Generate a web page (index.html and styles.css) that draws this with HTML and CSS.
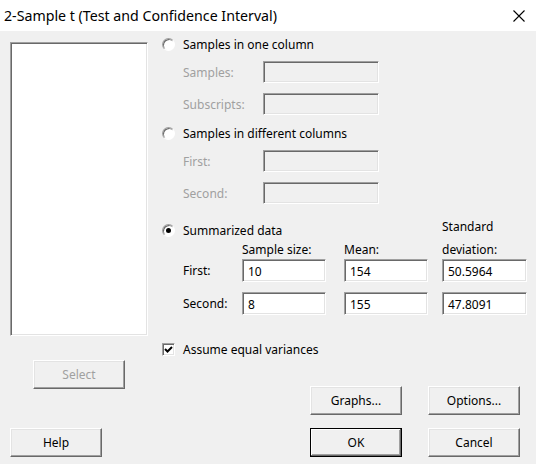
FILE: index.html
```html
<!DOCTYPE html>
<html>
	<head>
		<meta charset="UTF-8">
		<title>2-Sample t (Test and Confidence Interval)</title>
		<link rel="stylesheet" href="styles.css">
	</head>
	<body>
		<header class="titlebar">
			<span class="title">2-Sample t (Test and Confidence Interval)</span>
			<svg class="close" width="12" height="12" viewBox="0 0 12 12">
				<path d="M0.5 0.5 L11.5 11.5 M11.5 0.5 L0.5 11.5" stroke="#000" stroke-width="1.1" fill="none"/>
			</svg>
		</header>
		<div class="dialog">
			<div class="main">
				<div class="leftcol">
					<div class="listbox"></div>
					<button class="btn btn-select" disabled>Select</button>
				</div>
				<div class="rightcol">
					<label class="radio-row r1"><span class="radio"></span>Samples in one column</label>
					<div class="field"><span class="lbl disabled">Samples:</span><span class="box off"></span></div>
					<div class="field"><span class="lbl disabled">Subscripts:</span><span class="box off"></span></div>
					<label class="radio-row r2"><span class="radio"></span>Samples in different columns</label>
					<div class="field"><span class="lbl disabled">First:</span><span class="box off"></span></div>
					<div class="field"><span class="lbl disabled">Second:</span><span class="box off"></span></div>

					<div class="summary">
						<span class="radio on s-radio"></span>
						<span class="s-title">Summarized data</span>
						<span class="s-std1">Standard</span>
						<span class="s-head c-n">Sample size:</span>
						<span class="s-head c-mean">Mean:</span>
						<span class="s-head s-std2">deviation:</span>

						<span class="s-lbl row-a">First:</span>
						<span class="box val row-a c-n">10</span>
						<span class="box val row-a c-mean">154</span>
						<span class="box val row-a c-sd">50.5964</span>

						<span class="s-lbl row-b">Second:</span>
						<span class="box val row-b c-n">8</span>
						<span class="box val row-b c-mean">155</span>
						<span class="box val row-b c-sd">47.8091</span>
					</div>

					<label class="check-row">
						<span class="check">
							<svg width="9" height="9" viewBox="0 0 9 9">
								<path d="M1 4 L3.5 6.5 L8 2" stroke="#000" stroke-width="2" fill="none"/>
							</svg>
						</span>
						Assume equal variances
					</label>

					<div class="row-opts">
						<button class="btn">Graphs...</button>
						<button class="btn">Options...</button>
					</div>
				</div>
			</div>
			<div class="row-bottom">
				<button class="btn">Help</button>
				<span class="spacer"></span>
				<button class="btn btn-default">OK</button>
				<button class="btn">Cancel</button>
			</div>
		</div>
	</body>
</html>
```

FILE: styles.css
```css
body {
	margin: 0;
	background: #f0f0f0;
	font-family: "Noto Sans", Tahoma, sans-serif;
	font-size: 12px;
	color: #000;
}

.titlebar {
	height: 31px;
	background: #fff;
	display: flex;
	align-items: center;
	padding-left: 4px;
	padding-right: 11px;
}
.title {
	font-family: "Noto Sans", "Segoe UI", sans-serif;
	font-size: 14.2px;
	flex: 1;
}

.dialog {
	padding: 0 9px 0 10px;
}

.main {
	display: flex;
}

.leftcol {
	flex: 0 0 152px;
	padding-top: 11px;
}
.listbox {
	width: 136px;
	height: 292px;
	background: #fff;
	border: 1px solid;
	border-color: #a0a0a0 #fff #fff #a0a0a0;
	box-shadow: inset 1px 1px #696969, inset -1px -1px #e3e3e3;
}
.btn-select {
	margin: 24px 0 0 23px;
}

/* buttons */
.btn {
	width: 92px;
	height: 29px;
	background: #f0f0f0;
	font: inherit;
	color: #000;
	padding: 0;
	border: 1px solid;
	border-color: #fff #696969 #696969 #fff;
	box-shadow: inset -1px -1px #a0a0a0, inset 1px 1px #e3e3e3;
}
.btn:disabled {
	color: #a0a0a0;
}
.btn-default {
	border-color: #000;
	box-shadow: inset -1px -1px #696969, inset 1px 1px #fff, inset -2px -2px #a0a0a0;
}

/* radios / check */
.radio-row {
	display: flex;
	align-items: center;
	height: 14px;
	gap: 8px;
}
.radio {
	box-sizing: border-box;
	flex: none;
	width: 13px;
	height: 13px;
	border-radius: 50%;
	background: #fff;
	border: 1px solid;
	border-color: #a0a0a0 #fff #fff #a0a0a0;
	box-shadow: inset 1px 1px #696969;
	position: relative;
}
.radio.on::after {
	content: "";
	position: absolute;
	left: 3px;
	top: 3px;
	width: 5px;
	height: 5px;
	border-radius: 50%;
	background: #000;
}
.r1 { margin-top: 6px; }
.r2 { margin-top: 11px; }

.rightcol {
	flex: 1;
}

.field {
	display: flex;
	align-items: center;
	margin-top: 10px;
	padding-left: 21px;
}
.lbl {
	width: 80px;
}
.disabled {
	color: #a0a0a0;
}

.box {
	box-sizing: border-box;
	display: block;
	width: 116px;
	height: 22px;
	border: 1px solid;
	border-color: #a0a0a0 #fff #fff #a0a0a0;
	box-shadow: inset 1px 1px #696969, inset -1px -1px #e3e3e3;
}
.box.off {
	background: #f0f0f0;
}
.box.val {
	width: 84px;
	height: 23px;
	background: #fff;
	padding: 3px 0 0 5px;
}
.box.c-sd {
	width: 85px;
}

/* summarized data */
.summary {
	display: grid;
	grid-template-columns: 21px 59px 102px 98px 85px;
	grid-template-rows: 20px 21px 23px 10px 23px;
	margin-top: 14px;
}
.s-radio {
	grid-column: 1;
	grid-row: 1;
	align-self: center;
	margin-top: 4px;
}
.s-title {
	grid-column: 2 / 5;
	grid-row: 1;
	align-self: center;
	margin-top: 4px;
}
.s-std1 {
	grid-column: 5;
	grid-row: 1;
}
.s-head {
	grid-row: 2;
	align-self: end;
	margin-bottom: 1px;
}
.c-n { grid-column: 3; }
.c-mean { grid-column: 4; }
.c-sd { grid-column: 5; }
.s-std2 {
	grid-column: 5;
	grid-row: 2;
	margin-top: 2px;
}
.s-lbl {
	grid-column: 2;
	align-self: center;
}
.row-a { grid-row: 3; }
.row-b { grid-row: 5; }

.check-row {
	display: flex;
	align-items: center;
	gap: 8px;
	margin-top: 26px;
}
.check {
	box-sizing: border-box;
	width: 13px;
	height: 13px;
	background: #fff;
	border: 1px solid;
	border-color: #a0a0a0 #fff #fff #a0a0a0;
	box-shadow: inset 1px 1px #696969, inset -1px -1px #e3e3e3;
	display: flex;
	align-items: center;
	justify-content: center;
}

.row-opts {
	display: flex;
	gap: 26px;
	justify-content: flex-end;
	margin-top: 28px;
	padding-right: 7px;
}

.row-bottom {
	display: flex;
	gap: 26px;
	margin-top: 13px;
	padding-right: 7px;
}
.row-bottom .spacer {
	flex: 1;
	margin-right: -26px;
}
```
